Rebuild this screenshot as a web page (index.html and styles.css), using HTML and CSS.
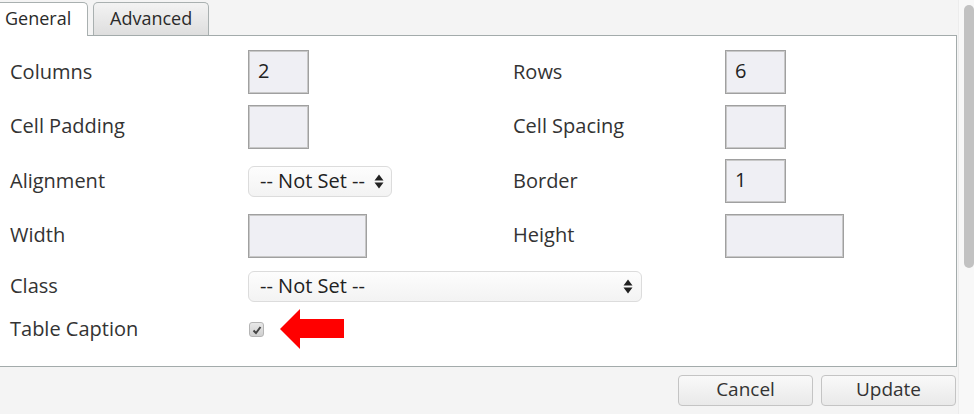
FILE: index.html
```html
<!DOCTYPE html>
<html>
<head>
<meta charset="utf-8">
<link rel="stylesheet" href="styles.css">
</head>
<body>
<div class="window">
  <div class="main">
    <div class="tabs">
      <div class="tab active">General</div>
      <div class="tab">Advanced</div>
    </div>
    <div class="panel">
      <div class="form">
        <div class="label">Columns</div>
        <div class="field"><div class="input small">2</div></div>
        <div class="label">Rows</div>
        <div class="field"><div class="input small">6</div></div>

        <div class="label">Cell Padding</div>
        <div class="field"><div class="input small"></div></div>
        <div class="label">Cell Spacing</div>
        <div class="field"><div class="input small"></div></div>

        <div class="label">Alignment</div>
        <div class="field"><div class="select align"><span>-- Not Set --</span><svg class="arrows" width="10" height="15" viewBox="0 0 10 15"><path d="M5 0.5 L9.5 6.5 L0.5 6.5 Z M0.5 8.5 L9.5 8.5 L5 14.5 Z" fill="#222"/></svg></div></div>
        <div class="label">Border</div>
        <div class="field"><div class="input small">1</div></div>

        <div class="label">Width</div>
        <div class="field"><div class="input wide"></div></div>
        <div class="label">Height</div>
        <div class="field"><div class="input wide"></div></div>

        <div class="label">Class</div>
        <div class="field span3"><div class="select cls"><span>-- Not Set --</span><svg class="arrows" width="10" height="15" viewBox="0 0 10 15"><path d="M5 0.5 L9.5 6.5 L0.5 6.5 Z M0.5 8.5 L9.5 8.5 L5 14.5 Z" fill="#222"/></svg></div></div>

        <div class="label">Table Caption</div>
        <div class="field span3 caption">
          <div class="checkbox"><svg width="10" height="10" viewBox="0 0 10 10"><path d="M1.5 5.5 L4 8 L8.5 2" fill="none" stroke="#444" stroke-width="2"/></svg></div>
          <svg class="red-arrow" width="65" height="41" viewBox="0 0 65 41"><path d="M0 20 L20 0 L20 10 L64 10 L64 29 L20 29 L20 40 Z" fill="#ff0000"/></svg>
        </div>
      </div>
    </div>
    <div class="footer">
      <button class="btn">Cancel</button>
      <button class="btn">Update</button>
    </div>
  </div>
  <div class="scrollbar"><div class="thumb"></div></div>
</div>
</body>
</html>
```
FILE: styles.css
```css
* { box-sizing: border-box; }
html, body { margin: 0; padding: 0; }
body {
  font-family: "Open Sans", "DejaVu Sans", sans-serif;
  color: #333;
  background: #f5f5f5;
}
.window {
  display: flex;
  width: 974px;
  height: 414px;
  overflow: hidden;
}
.main {
  width: 958px;
  display: flex;
  flex-direction: column;
  background: #f4f4f4;
}
.tabs {
  height: 35px;
  display: flex;
  align-items: flex-end;
  gap: 5px;
  position: relative;
  z-index: 1;
}
.tab {
  height: 33px;
  padding: 0 16px;
  font-size: 18px;
  line-height: 31px;
  color: #2a2a2a;
  border: 1px solid #a9b0b0;
  border-bottom: none;
  border-radius: 5px 5px 0 0;
  background: linear-gradient(#f3f3f3, #dedede);
}
.tab.active {
  width: 88px;
  padding: 0 0 0 5px;
  border-left: none;
  border-radius: 0 5px 0 0;
  background: #fff;
  height: 34px;
  margin-bottom: -1px;
}
.panel {
  width: 957px;
  height: 332px;
  background: #fff;
  border-top: 1px solid #a3abab;
  border-right: 1px solid #a3abab;
  border-bottom: 1px solid #a3abab;
  padding: 14px 0 0 10px;
}
.form {
  display: grid;
  grid-template-columns: 238px 265px 212px 1fr;
  grid-template-rows: 44px 44px 44px 44px 36px 30px;
  row-gap: 10.5px;
}
.label {
  font-size: 20px;
  display: flex;
  align-items: center;
  padding-bottom: 2px;
  color: #333;
}
.field {
  display: flex;
  align-items: center;
}
.span3 { grid-column: span 3; }
.input {
  height: 44px;
  border: 1px solid #a0a0a0;
  box-shadow: inset 0 0 0 1px #c8c8c8;
  background: #efeff4;
  font-size: 20px;
  line-height: 40px;
  padding-left: 9px;
  color: #222;
}
.input.small { width: 61px; }
.input.wide { width: 119px; }
.select {
  height: 31px;
  border: 1px solid #dcdcdc;
  border-radius: 6px;
  background: linear-gradient(#fdfdfd, #f3f3f3);
  display: flex;
  align-items: center;
  justify-content: space-between;
  padding: 0 7px 2px 11px;
  font-size: 20px;
  color: #222;
}
.select .arrows { margin-top: 2px; }
.select.align { width: 144px; }
.select.cls { width: 394px; padding-right: 8px; }
.caption { gap: 16px; }
.checkbox {
  width: 15px;
  height: 15px;
  margin-left: 1px;
  border: 1px solid #b5b5b5;
  border-radius: 3px;
  background: linear-gradient(#e8e8e8, #cfcfcf);
  display: flex;
  align-items: center;
  justify-content: center;
}
.footer {
  flex: 1;
  display: flex;
  justify-content: flex-end;
  align-items: flex-start;
  gap: 8px;
  padding: 8px 2px 0 0;
}
.btn {
  font-family: "Open Sans", "DejaVu Sans", sans-serif;
  font-size: 19px;
  color: #333;
  height: 31px;
  width: 135px;
  border: 1px solid #c4c4c4;
  border-radius: 4px;
  background: linear-gradient(#f9f9f9, #e9e9e9);
  padding: 0 0 3px 0;
  line-height: 26px;
}
.scrollbar {
  width: 16px;
  background: #f8f8f8;
  border-left: 1px solid #ececec;
  padding: 5px 1px 0 5px;
}
.thumb {
  width: 10px;
  height: 263px;
  border-radius: 5px;
  background: #c2c2c2;
}
```
